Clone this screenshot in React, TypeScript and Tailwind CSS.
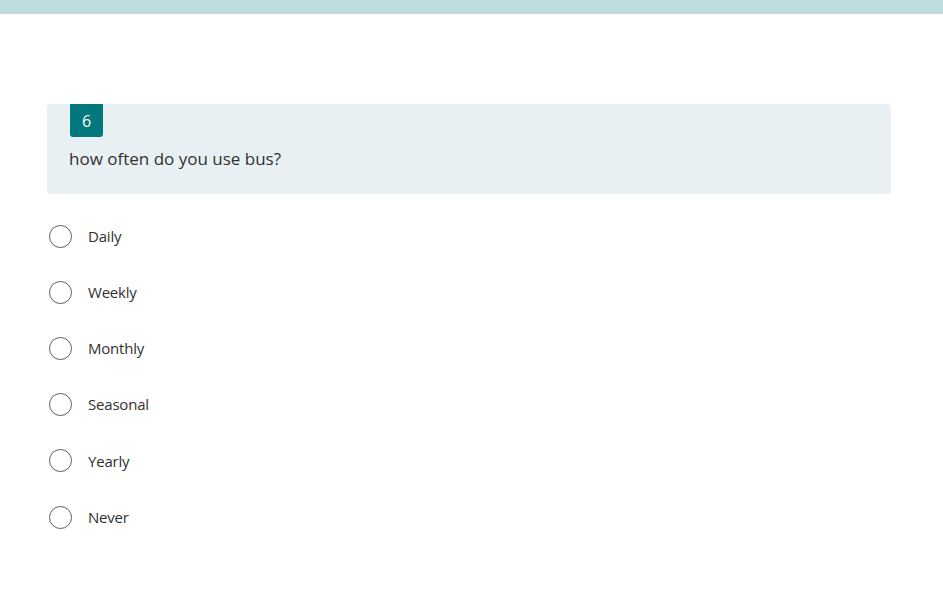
import React from "react";

const options = ["Daily", "Weekly", "Monthly", "Seasonal", "Yearly", "Never"];

export default function App() {
  return (
    <div className="w-[943px] h-[612px] bg-white" style={{ fontFamily: '"Open Sans", "Noto Sans", sans-serif' }}>
      <div className="h-[14px] bg-[#bfdde0]" />
      <div className="pl-[47px] pr-[52px] pt-[90px]">
        <div className="bg-[#e8f0f3] rounded-[4px] pb-[23px]">
          <div className="ml-[23px] w-[33px] h-[33px] bg-[#03787c] rounded-b-[3px] flex items-center justify-center text-white text-[16px]">
            6
          </div>
          <div className="mt-[10px] pl-[22px] text-[17px] leading-[24px] text-[#323130]">
            how often do you use bus?
          </div>
        </div>
        <div className="mt-[14px] flex flex-col">
          {options.map((o) => (
            <div key={o} className="h-[56.2px] flex items-center">
              <div className="w-[23px] h-[23px] rounded-full border border-[#605e5c] ml-[2px]" />
              <span className="ml-[16px] text-[15px] tracking-[-0.2px] text-[#323130]">{o}</span>
            </div>
          ))}
        </div>
      </div>
    </div>
  );
}
